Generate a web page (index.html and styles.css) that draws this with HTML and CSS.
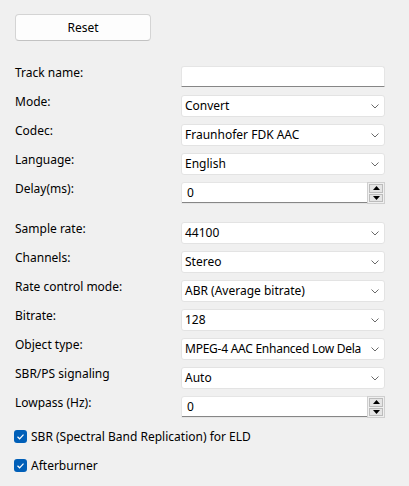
FILE: index.html
```html
<!DOCTYPE html>
<html>
<head>
<meta charset="utf-8">
<link rel="stylesheet" href="styles.css">
</head>
<body>
<div class="panel">
  <button class="btn">Reset</button>

  <div class="form first">
    <label class="lbl">Track name:</label>
    <div class="edit"></div>

    <label class="lbl">Mode:</label>
    <div class="combo"><span>Convert</span><svg class="chev" viewBox="0 0 8 5"><path d="M0.5 0.5 L4 4 L7.5 0.5" /></svg></div>

    <label class="lbl">Codec:</label>
    <div class="combo"><span>Fraunhofer FDK AAC</span><svg class="chev" viewBox="0 0 8 5"><path d="M0.5 0.5 L4 4 L7.5 0.5" /></svg></div>

    <label class="lbl">Language:</label>
    <div class="combo"><span>English</span><svg class="chev" viewBox="0 0 8 5"><path d="M0.5 0.5 L4 4 L7.5 0.5" /></svg></div>

    <label class="lbl">Delay(ms):</label>
    <div class="spin"><span class="val">0</span><div class="arrows"><div class="arr"><svg viewBox="0 0 7 4"><path d="M0 4 L3.5 0 L7 4 Z"/></svg></div><div class="arr"><svg viewBox="0 0 7 4"><path d="M0 0 L3.5 4 L7 0 Z"/></svg></div></div></div>
  </div>

  <div class="form second">
    <label class="lbl">Sample rate:</label>
    <div class="combo"><span>44100</span><svg class="chev" viewBox="0 0 8 5"><path d="M0.5 0.5 L4 4 L7.5 0.5" /></svg></div>

    <label class="lbl">Channels:</label>
    <div class="combo"><span>Stereo</span><svg class="chev" viewBox="0 0 8 5"><path d="M0.5 0.5 L4 4 L7.5 0.5" /></svg></div>

    <label class="lbl">Rate control mode:</label>
    <div class="combo"><span>ABR (Average bitrate)</span><svg class="chev" viewBox="0 0 8 5"><path d="M0.5 0.5 L4 4 L7.5 0.5" /></svg></div>

    <label class="lbl">Bitrate:</label>
    <div class="combo"><span>128</span><svg class="chev" viewBox="0 0 8 5"><path d="M0.5 0.5 L4 4 L7.5 0.5" /></svg></div>

    <label class="lbl">Object type:</label>
    <div class="combo"><span class="tight">MPEG-4 AAC Enhanced Low Dela</span><svg class="chev" viewBox="0 0 8 5"><path d="M0.5 0.5 L4 4 L7.5 0.5" /></svg></div>

    <label class="lbl">SBR/PS signaling</label>
    <div class="combo"><span>Auto</span><svg class="chev" viewBox="0 0 8 5"><path d="M0.5 0.5 L4 4 L7.5 0.5" /></svg></div>

    <label class="lbl">Lowpass (Hz):</label>
    <div class="spin"><span class="val">0</span><div class="arrows"><div class="arr"><svg viewBox="0 0 7 4"><path d="M0 4 L3.5 0 L7 4 Z"/></svg></div><div class="arr"><svg viewBox="0 0 7 4"><path d="M0 0 L3.5 4 L7 0 Z"/></svg></div></div></div>
  </div>

  <div class="checks">
    <div class="check"><span class="box"><svg viewBox="0 0 13 13"><path d="M3.5 6.8 L5.6 8.8 L9.5 4.6"/></svg></span><span>SBR (Spectral Band Replication) for ELD</span></div>
    <div class="check"><span class="box"><svg viewBox="0 0 13 13"><path d="M3.5 6.8 L5.6 8.8 L9.5 4.6"/></svg></span><span>Afterburner</span></div>
  </div>
</div>
</body>
</html>
```

FILE: styles.css
```css
html, body {
  margin: 0;
  padding: 0;
  background: #f0f0f0;
}
body {
  font-family: "Noto Sans", "Open Sans", sans-serif;
  font-size: 12px;
  color: #000;
}
.panel {
  padding: 14px 24px 0 15px;
  display: flex;
  flex-direction: column;
  align-items: flex-start;
}
.btn {
  width: 136px;
  height: 27px;
  background: #fdfdfd;
  border: 1px solid #d4d4d4;
  border-bottom-color: #c2c2c2;
  border-radius: 4px;
  font: inherit;
  color: #000;
  padding: 0;
}
.form {
  display: grid;
  grid-template-columns: 166px 204px;
  grid-auto-rows: 22px;
  row-gap: 7px;
  width: 370px;
}
.form.first { margin-top: 25px; }
.form.second { margin-top: 18px; }
.lbl {
  align-self: start;
  line-height: 14px;
  white-space: nowrap;
}
.edit {
  background: #fff;
  border: 1px solid #e5e5e5;
  border-bottom: 1px solid #868686;
  border-radius: 3px 3px 0 0;
  box-sizing: border-box;
  height: 21px;
}
.combo {
  background: #fff;
  border: 1px solid #e3e3e3;
  border-radius: 3px;
  box-sizing: border-box;
  display: flex;
  align-items: center;
  padding: 0 0 0 3px;
  overflow: hidden;
}
.combo span {
  flex: 1;
  min-width: 0;
  white-space: nowrap;
  line-height: 16px;
}
.combo span.tight {
  letter-spacing: -0.25px;
}
.chev {
  width: 8px;
  height: 5px;
  margin: 0 5px 0 2px;
  flex: none;
  fill: none;
  stroke: #6a6a6a;
  stroke-width: 1;
}
.spin {
  background: #fff;
  border: 1px solid #e5e5e5;
  border-radius: 3px 3px 0 0;
  box-sizing: border-box;
  display: flex;
  align-items: stretch;
}
.spin .val {
  flex: 1;
  padding-left: 5px;
  line-height: 20px;
  border-bottom: 1px solid #868686;
}
.arrows {
  width: 18px;
  display: flex;
  flex-direction: column;
  gap: 1px;
  border: 1px solid #cfcfcf;
  margin: -1px -1px -1px 0;
  background: #f0f0f0;
  box-sizing: border-box;
  padding: 1px;
}
.arr {
  flex: 1;
  background: #e5e5e5;
  border: 1px solid #bcbcbc;
  display: flex;
  align-items: center;
  justify-content: center;
}
.arr svg {
  width: 7px;
  height: 4px;
  fill: #000;
}
.checks {
  margin-top: 10px;
  display: flex;
  flex-direction: column;
  gap: 13px;
}
.check {
  display: flex;
  align-items: center;
  gap: 4px;
  height: 16px;
  margin-left: -1px;
}
.box {
  width: 13px;
  height: 13px;
  background: #005fb8;
  border-radius: 3px;
  display: inline-block;
  flex: none;
}
.box svg {
  width: 13px;
  height: 13px;
  display: block;
  fill: none;
  stroke: #fff;
  stroke-width: 1.2;
}
```
